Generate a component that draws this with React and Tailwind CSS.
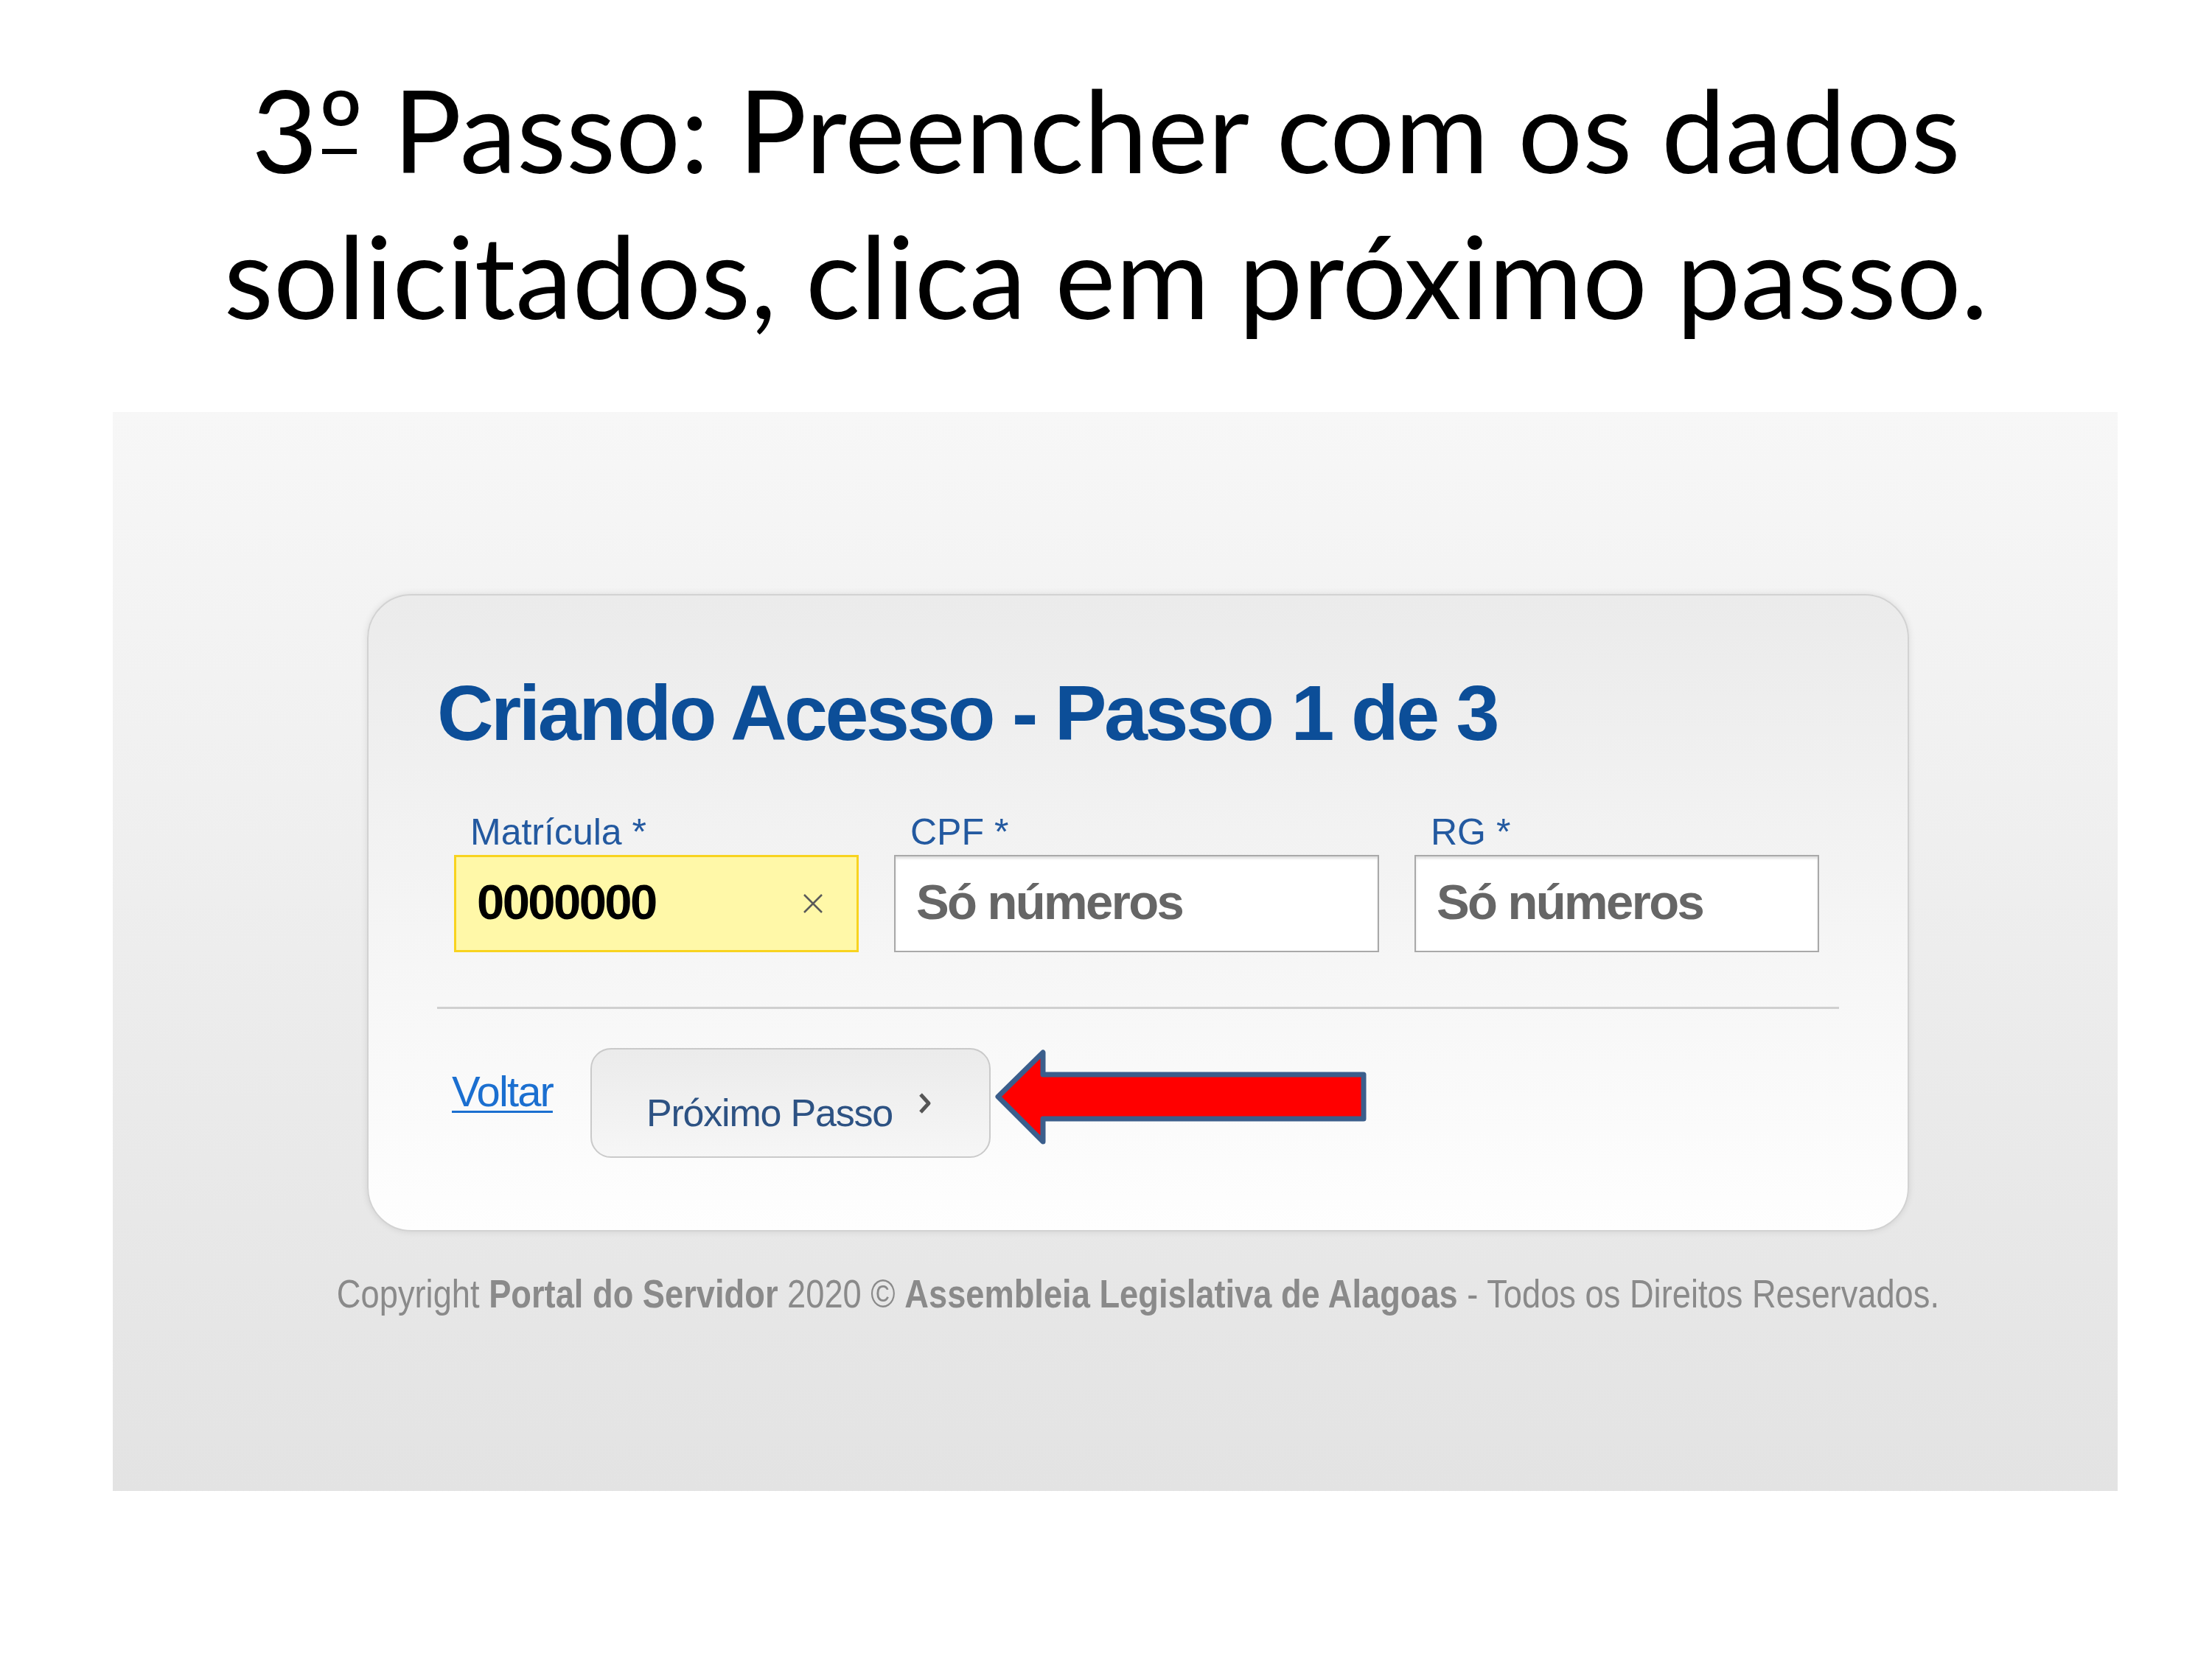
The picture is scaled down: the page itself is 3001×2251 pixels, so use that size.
import { useState } from 'react';

// Campo do formulário com label em cima
function Field({ label, value, placeholder, width, yellow }) {
  return (
    <div className="flex flex-col" style={{ width }}>
      <label className="pl-[22px] text-[50px] leading-[50px] text-[#2359a0]">{label}</label>
      <div
        className={`mt-[6px] flex h-[132px] items-center pl-[28px] pr-[44px] pb-[6px] ${
          yellow
            ? 'border-[3px] border-[#f8d31f] bg-[#fff8a8]'
            : 'border-2 border-[#a9a9a9] bg-white shadow-[inset_0_3px_3px_rgba(0,0,0,0.12)]'
        }`}
      >
        {value ? (
          <span className="text-[67px] font-bold leading-none tracking-[-2.6px] text-black">{value}</span>
        ) : (
          <span className="text-[67px] font-bold leading-none tracking-[-2.6px] text-[#666666]">{placeholder}</span>
        )}
        {yellow && (
          <svg className="ml-auto mt-[6px]" width="30" height="30" viewBox="0 0 30 30">
            <path d="M3 3 L27 27 M27 3 L3 27" stroke="#5a5a5a" strokeWidth="2.5" fill="none" />
          </svg>
        )}
      </div>
    </div>
  );
}

export default function App() {
  const [matricula] = useState('0000000');

  return (
    <div className="flex h-[2251px] w-[3001px] flex-col bg-white font-['Liberation_Sans',Arial,sans-serif]">
      {/* titulo do slide */}
      <div className="h-[559px] pt-[76px]">
        <h1 className="text-center font-['Lato','Open_Sans',sans-serif] text-[155px] font-normal leading-[198px] text-black">
          3
          <span className="relative">
            º
            <span className="absolute left-[6px] right-[10px] top-[120px] h-[7px] bg-black" />
          </span>{' '}
          Passo: Preencher com os dados
          <br />
          solicitados, clica em próximo passo.
        </h1>
      </div>

      {/* print da tela do portal */}
      <div className="ml-[153px] h-[1464px] w-[2720px] bg-gradient-to-b from-[#f7f7f7] to-[#e3e3e3] pl-[345px] pt-[247px]">
        <div className="h-[865px] w-[2092px] rounded-[60px] border-2 border-[#d2d2d2] bg-gradient-to-b from-[#ebebeb] to-[#fefefe] px-[93px] pt-[106px] shadow-[0_0_10px_rgba(0,0,0,0.10)]">
          <h2 className="text-[106px] font-bold leading-none tracking-[-3.5px] text-[#0c4e98]">
            Criando Acesso - Passo 1 de 3
          </h2>

          <div className="mt-[84px] flex gap-[48px] pl-[23px]">
            <Field label="Matrícula *" value={matricula} width={549} yellow />
            <Field label="CPF *" placeholder="Só números" width={658} />
            <Field label="RG *" placeholder="Só números" width={549} />
          </div>

          <div className="mt-[74px] h-[3px] bg-[#d0d0d0]" />

          <div className="mt-[53px] flex items-start pl-[20px]">
            <a
              href="#"
              className="mt-[30px] text-[58px] leading-none tracking-[-1.9px] text-[#1b6fd0] underline decoration-[3px] underline-offset-[6px]"
            >
              Voltar
            </a>
            <button className="ml-[51px] flex h-[149px] w-[543px] items-start rounded-[28px] border-2 border-[#cacaca] bg-gradient-to-b from-[#ebebeb] to-[#f6f6f6] pl-[74px] pt-[60px]">
              <span className="text-[52px] leading-none tracking-[-1.2px] text-[#2d5283]">Próximo Passo</span>
              <svg className="ml-[34px] -mt-[3px]" width="20" height="32" viewBox="0 0 20 32">
                <path d="M4 4 L15 16 L4 28" stroke="#555555" strokeWidth="5" fill="none" strokeLinejoin="round" />
              </svg>
            </button>
            <svg className="ml-[3px]" width="512" height="136" viewBox="0 0 512 136">
              <polygon
                points="7,66 68,6 68,36 503,36 503,96 68,96 68,127"
                fill="#ff0000"
                stroke="#3b5e8c"
                strokeWidth="7"
                strokeLinejoin="round"
              />
            </svg>
          </div>
        </div>

        <p className="mt-[58px] flex w-[2092px] justify-center text-[53px] leading-none text-[#8a8a8a]">
          <span className="shrink-0 scale-x-[0.854] whitespace-nowrap">
            Copyright <b>Portal do Servidor</b> 2020 © <b>Assembleia Legislativa de Alagoas</b> - Todos os Direitos Reservados.
          </span>
        </p>
      </div>
    </div>
  );
}
